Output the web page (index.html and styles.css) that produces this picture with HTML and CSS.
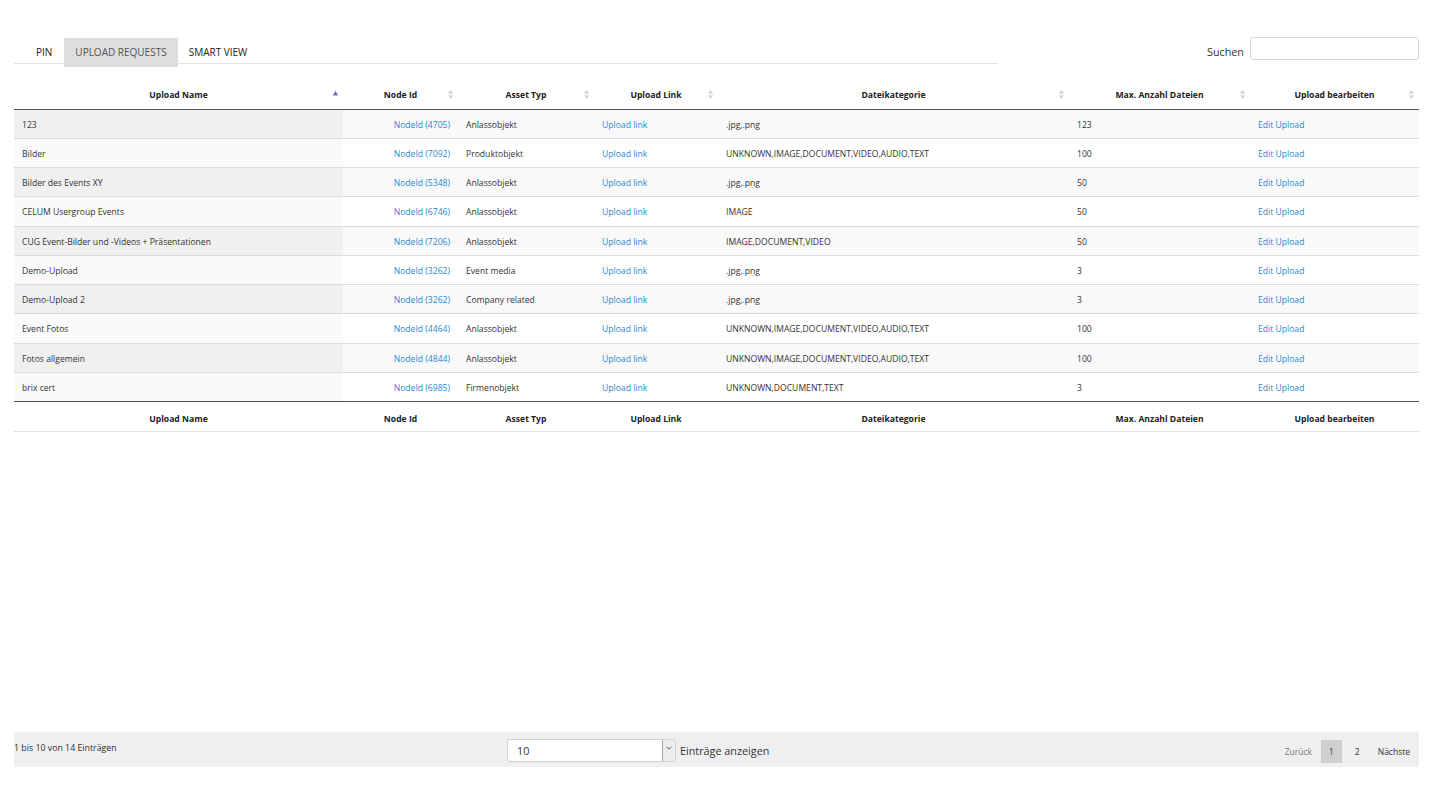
FILE: index.html
```html
<!DOCTYPE html>
<html lang="de">
<head>
<meta charset="utf-8">
<title>Upload Requests</title>
<link rel="stylesheet" href="styles.css">
</head>
<body>
<div class="page">
  <div class="topbar">
    <ul class="tabs">
      <li class="tab">PIN</li>
      <li class="tab active">UPLOAD REQUESTS</li>
      <li class="tab">SMART VIEW</li>
    </ul>
    <label class="search"><span class="search-label">Suchen</span><span class="search-input"></span></label>
  </div>

  <table class="grid">
    <colgroup>
      <col class="c1"><col class="c2"><col class="c3"><col class="c4"><col class="c5"><col class="c6"><col class="c7">
    </colgroup>
    <thead>
      <tr>
        <th class="sort asc">Upload Name<svg class="si" viewBox="0 0 7 11"><path d="M0.8 6.6 L3.5 1.8 L6.2 6.6Z" fill="#6a6ad8"/></svg></th>
        <th class="sort">Node Id<svg class="si" viewBox="0 0 7 11"><path d="M1 4.8 L3.5 0.8 L6 4.8Z M1 6.2 L3.5 10.2 L6 6.2Z" fill="#d2d2d2"/></svg></th>
        <th class="sort">Asset Typ<svg class="si" viewBox="0 0 7 11"><path d="M1 4.8 L3.5 0.8 L6 4.8Z M1 6.2 L3.5 10.2 L6 6.2Z" fill="#d2d2d2"/></svg></th>
        <th class="sort">Upload Link<svg class="si" viewBox="0 0 7 11"><path d="M1 4.8 L3.5 0.8 L6 4.8Z M1 6.2 L3.5 10.2 L6 6.2Z" fill="#d2d2d2"/></svg></th>
        <th class="sort">Dateikategorie<svg class="si" viewBox="0 0 7 11"><path d="M1 4.8 L3.5 0.8 L6 4.8Z M1 6.2 L3.5 10.2 L6 6.2Z" fill="#d2d2d2"/></svg></th>
        <th class="sort">Max. Anzahl Dateien<svg class="si" viewBox="0 0 7 11"><path d="M1 4.8 L3.5 0.8 L6 4.8Z M1 6.2 L3.5 10.2 L6 6.2Z" fill="#d2d2d2"/></svg></th>
        <th class="sort">Upload bearbeiten<svg class="si" viewBox="0 0 7 11"><path d="M1 4.8 L3.5 0.8 L6 4.8Z M1 6.2 L3.5 10.2 L6 6.2Z" fill="#d2d2d2"/></svg></th>
      </tr>
    </thead>
    <tbody>
      <tr><td class="s1">123</td><td class="nid"><a>NodeId (4705)</a></td><td>Anlassobjekt</td><td><a>Upload link</a></td><td>.jpg,.png</td><td>123</td><td><a>Edit Upload</a></td></tr>
      <tr><td class="s1">Bilder</td><td class="nid"><a>NodeId (7092)</a></td><td>Produktobjekt</td><td><a>Upload link</a></td><td>UNKNOWN,IMAGE,DOCUMENT,VIDEO,AUDIO,TEXT</td><td>100</td><td><a>Edit Upload</a></td></tr>
      <tr><td class="s1">Bilder des Events XY</td><td class="nid"><a>NodeId (5348)</a></td><td>Anlassobjekt</td><td><a>Upload link</a></td><td>.jpg,.png</td><td>50</td><td><a>Edit Upload</a></td></tr>
      <tr><td class="s1">CELUM Usergroup Events</td><td class="nid"><a>NodeId (6746)</a></td><td>Anlassobjekt</td><td><a>Upload link</a></td><td>IMAGE</td><td>50</td><td><a>Edit Upload</a></td></tr>
      <tr><td class="s1">CUG Event-Bilder und -Videos + Präsentationen</td><td class="nid"><a>NodeId (7206)</a></td><td>Anlassobjekt</td><td><a>Upload link</a></td><td>IMAGE,DOCUMENT,VIDEO</td><td>50</td><td><a>Edit Upload</a></td></tr>
      <tr><td class="s1">Demo-Upload</td><td class="nid"><a>NodeId (3262)</a></td><td>Event media</td><td><a>Upload link</a></td><td>.jpg,.png</td><td>3</td><td><a>Edit Upload</a></td></tr>
      <tr><td class="s1">Demo-Upload 2</td><td class="nid"><a>NodeId (3262)</a></td><td>Company related</td><td><a>Upload link</a></td><td>.jpg,.png</td><td>3</td><td><a>Edit Upload</a></td></tr>
      <tr><td class="s1">Event Fotos</td><td class="nid"><a>NodeId (4464)</a></td><td>Anlassobjekt</td><td><a>Upload link</a></td><td>UNKNOWN,IMAGE,DOCUMENT,VIDEO,AUDIO,TEXT</td><td>100</td><td><a>Edit Upload</a></td></tr>
      <tr><td class="s1">Fotos allgemein</td><td class="nid"><a>NodeId (4844)</a></td><td>Anlassobjekt</td><td><a>Upload link</a></td><td>UNKNOWN,IMAGE,DOCUMENT,VIDEO,AUDIO,TEXT</td><td>100</td><td><a>Edit Upload</a></td></tr>
      <tr><td class="s1">brix cert</td><td class="nid"><a>NodeId (6985)</a></td><td>Firmenobjekt</td><td><a>Upload link</a></td><td>UNKNOWN,DOCUMENT,TEXT</td><td>3</td><td><a>Edit Upload</a></td></tr>
    </tbody>
    <tfoot>
      <tr><th>Upload Name</th><th>Node Id</th><th>Asset Typ</th><th>Upload Link</th><th>Dateikategorie</th><th>Max. Anzahl Dateien</th><th>Upload bearbeiten</th></tr>
    </tfoot>
  </table>

  <div class="footer">
    <div class="info">1 bis 10 von 14 Einträgen</div>
    <div class="length">
      <span class="select"><span class="select-val">10</span><span class="select-btn"><svg viewBox="0 0 8 6" class="chev"><path d="M1.5 1.8 L4 4.2 L6.5 1.8" fill="none" stroke="#555" stroke-width="1"/></svg></span></span>
      <span class="length-label">Einträge anzeigen</span>
    </div>
    <div class="pager">
      <span class="pbtn disabled">Zurück</span>
      <span class="pbtn current">1</span>
      <span class="pbtn">2</span>
      <span class="pbtn">Nächste</span>
    </div>
  </div>
</div>
</body>
</html>
```

FILE: styles.css
```css
* { box-sizing: border-box; }
html, body { margin: 0; padding: 0; background: #fff; }
body {
  font-family: "Open Sans", "DejaVu Sans", sans-serif;
  color: #333;
}
.page {
  height: 797px;
  padding: 37px 32px 30px 14px;
  display: flex;
  flex-direction: column;
}
.topbar {
  display: flex;
  justify-content: space-between;
  align-items: flex-start;
  height: 43px;
}
.tabs {
  list-style: none;
  margin: 1px 0 0 0;
  padding: 0 0 0 11px;
  width: 984px;
  height: 26px;
  border-bottom: 1px solid #e4e4e4;
  display: flex;
  align-items: flex-start;
}
.tab {
  font-size: 10px;
  color: #222;
  height: 29px;
  line-height: 29px;
  padding: 0 11px 0 11px;
}
.tab.active {
  background: #dedede;
  color: #555;
  margin-left: 1px;
  padding: 0 11px 0 11px;
}
.search {
  display: flex;
  align-items: center;
  gap: 6px;
  font-size: 10.8px;
  color: #333;
}
.search-label { padding-top: 5px; }
.search-input {
  display: block;
  width: 169px;
  height: 23px;
  border: 1px solid #d6d6d6;
  border-radius: 3px;
  background: #fff;
}
.grid {
  width: 1405px;
  border-collapse: collapse;
  table-layout: fixed;
  font-size: 8.6px;
}
.c1 { width: 329px; } .c2 { width: 115px; } .c3 { width: 136px; } .c4 { width: 124px; }
.c5 { width: 351px; } .c6 { width: 181px; } .c7 { width: 169px; }
.grid th {
  font-weight: 700;
  color: #222;
  text-align: center;
  padding: 0 8px;
  white-space: nowrap;
}
.grid thead th {
  height: 29px;
  padding-top: 1px;
  border-bottom: 1.5px solid #555;
  position: relative;
}
.si {
  position: absolute;
  right: 4px;
  top: 9px;
  width: 7px;
  height: 11px;
}
.grid tbody td {
  height: 29.25px;
  padding: 2px 8px 0 8px;
  border-top: 1px solid #dcdcdc;
  white-space: nowrap;
  overflow: hidden;
  color: #333;
}
.grid tbody tr:first-child td { border-top: none; }
.grid tbody tr:nth-child(odd) td { background: #f9f9f9; }
.grid tbody tr:nth-child(odd) td.s1 { background: #f0f0f0; }
.grid tbody tr:nth-child(even) td { background: #fff; }
.grid tbody tr:nth-child(even) td.s1 { background: #fafafa; }
.grid td.nid { text-align: right; }
.grid a { color: #1f8ad2; text-decoration: none; }
.grid tfoot th {
  height: 30px;
  padding-top: 4px;
  border-top: 1.5px solid #555;
  border-bottom: 1px solid #e2e2e2;
}
.footer {
  margin-top: auto;
  height: 35px;
  width: 1405px;
  background: #efefef;
  display: flex;
  align-items: center;
}
.info { font-size: 8.8px; color: #333; width: 493px; flex: none; padding-bottom: 3px; }
.length { display: flex; align-items: center; gap: 4px; padding-top: 2px; }
.select {
  display: flex;
  width: 169px;
  height: 23px;
  background: #fff;
  border: 1px solid #d0d0d0;
  border-radius: 3px;
  overflow: hidden;
}
.select-val {
  flex: 1;
  font-size: 10.8px;
  line-height: 21px;
  padding-left: 9px;
  color: #333;
}
.select-btn {
  width: 13px;
  background: #ececec;
  border-left: 1px solid #a8a8a8;
  display: flex;
  align-items: center;
  justify-content: center;
  padding-bottom: 6px;
}
.chev { width: 8px; height: 6px; }
.length-label { font-size: 10.8px; color: #333; }
.pager {
  margin-left: auto;
  display: flex;
  align-items: center;
  padding-top: 3px;
}
.pbtn {
  font-size: 8.5px;
  color: #333;
  padding: 0 9px;
  height: 23px;
  line-height: 23px;
}
.pbtn.disabled { color: #777; }
.pbtn.current { background: #cfcfcf; padding: 0 8px; margin-right: 4px; }
```
